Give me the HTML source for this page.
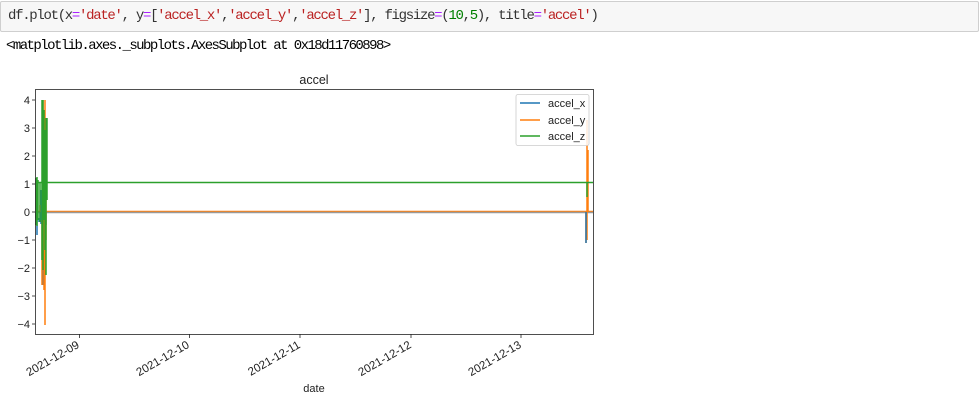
<!DOCTYPE html>
<html><head><style>
body{margin:0;background:#fff;width:979px;height:402px;overflow:hidden;font-family:"Liberation Mono","DejaVu Sans Mono",monospace;}
.cell{position:absolute;left:0;top:1px;width:977px;height:29px;background:#f7f7f7;border:1px solid #cfcfcf;border-radius:2px;}
.code{position:absolute;left:7px;top:6px;font-size:14px;color:#333;white-space:pre;letter-spacing:-1.3px}
.s{color:#ba2121}.o{color:#aa22ff}.n{color:#008000}
.out{position:absolute;left:6px;top:38px;font-size:14px;color:#000;white-space:pre;letter-spacing:-1.55px}
svg{position:absolute;left:0;top:0}
</style></head><body>
<div class="cell"><div class="code">df.plot(x<span class="o">=</span><span class="s">'date'</span>, y<span class="o">=</span>[<span class="s">'accel_x'</span>,<span class="s">'accel_y'</span>,<span class="s">'accel_z'</span>], figsize<span class="o">=</span>(<span class="n">10</span>,<span class="n">5</span>), title<span class="o">=</span><span class="s">'accel'</span>)</div></div>
<div class="out">&lt;matplotlib.axes._subplots.AxesSubplot at 0x18d11760898&gt;</div>
<svg width="979" height="402" font-family="Liberation Sans, DejaVu Sans, sans-serif" font-size="11" fill="#222">
<text x="314" y="84" text-anchor="middle" font-size="12.5">accel</text>
<g stroke-width="1.5" fill="none">
<line x1="36" y1="212" x2="593" y2="212" stroke="#1f77b4"/>
<line x1="36" y1="211.5" x2="593" y2="211.5" stroke="#ff7f0e"/>
<line x1="36" y1="212.5" x2="593" y2="212.5" stroke="#999"/>
<path d="M36 212 V218 M37 210 V235 M39 218 V222 M40 211 V222 M41 190 V224 M43 195 V285 M44 230 V284 M46 212 V225" stroke="#1f77b4"/>
<path d="M40 212 V205 M42 220 V285 M43 100 V240 M44 150 V290 M45 100 V325 M46 160 V240 M586 212 V243 M587 212 V240" stroke="#ff7f0e"/>
<path d="M587 120 V212 M588 150 V212" stroke="#ff7f0e"/>
<path d="M586 212 V243" stroke="#1f77b4"/>
<path d="M36 178 V225 M37 177 V226 M38 180 V220 M40 182 V222 M42 100 V260 M43 100 V270 M44 110 V220 M45 130 V250 M46 118 V275 M47 118 V200" stroke="#2ca02c"/>
<line x1="36" y1="182.5" x2="593" y2="182.5" stroke="#2ca02c"/>
<path d="M587 183 V197" stroke="#2ca02c"/>
</g>
<rect x="35.5" y="89.5" width="558" height="245" fill="none" stroke="#222" stroke-width="0.8"/>
<rect x="516" y="94.5" width="73" height="51" rx="2" fill="#fff" fill-opacity="0.85" stroke="#ccc" stroke-width="0.8"/>
<g stroke-width="1.5"><line x1="520" y1="103" x2="540" y2="103" stroke="#1f77b4"/><line x1="520" y1="120" x2="540" y2="120" stroke="#ff7f0e"/><line x1="520" y1="136" x2="540" y2="136" stroke="#2ca02c"/></g>
<text x="548" y="107">accel_x</text><text x="548" y="124">accel_y</text><text x="548" y="140">accel_z</text>
<g stroke="#222" stroke-width="0.8">
<line x1="32" y1="100" x2="35" y2="100"/><line x1="32" y1="128" x2="35" y2="128"/><line x1="32" y1="156" x2="35" y2="156"/><line x1="32" y1="184" x2="35" y2="184"/><line x1="32" y1="212" x2="35" y2="212"/><line x1="32" y1="240" x2="35" y2="240"/><line x1="32" y1="268" x2="35" y2="268"/><line x1="32" y1="296" x2="35" y2="296"/><line x1="32" y1="324" x2="35" y2="324"/>
<line x1="79.5" y1="334" x2="79.5" y2="338"/><line x1="189.5" y1="334" x2="189.5" y2="338"/><line x1="300" y1="334" x2="300" y2="338"/><line x1="411" y1="334" x2="411" y2="338"/><line x1="521" y1="334" x2="521" y2="338"/>
</g>
<g text-anchor="end">
<text x="30" y="104">4</text><text x="30" y="132">3</text><text x="30" y="160">2</text><text x="30" y="188">1</text><text x="30" y="216">0</text><text x="30" y="244">−1</text><text x="30" y="272">−2</text><text x="30" y="300">−3</text><text x="30" y="328">−4</text>
</g>
<g text-anchor="end" font-size="11.5">
<text transform="translate(80,347) rotate(-30)">2021-12-09</text>
<text transform="translate(190,347) rotate(-30)">2021-12-10</text>
<text transform="translate(301,347) rotate(-30)">2021-12-11</text>
<text transform="translate(412,347) rotate(-30)">2021-12-12</text>
<text transform="translate(522,347) rotate(-30)">2021-12-13</text>
</g>
<text x="314" y="392" text-anchor="middle">date</text>
</svg>
</body></html>
